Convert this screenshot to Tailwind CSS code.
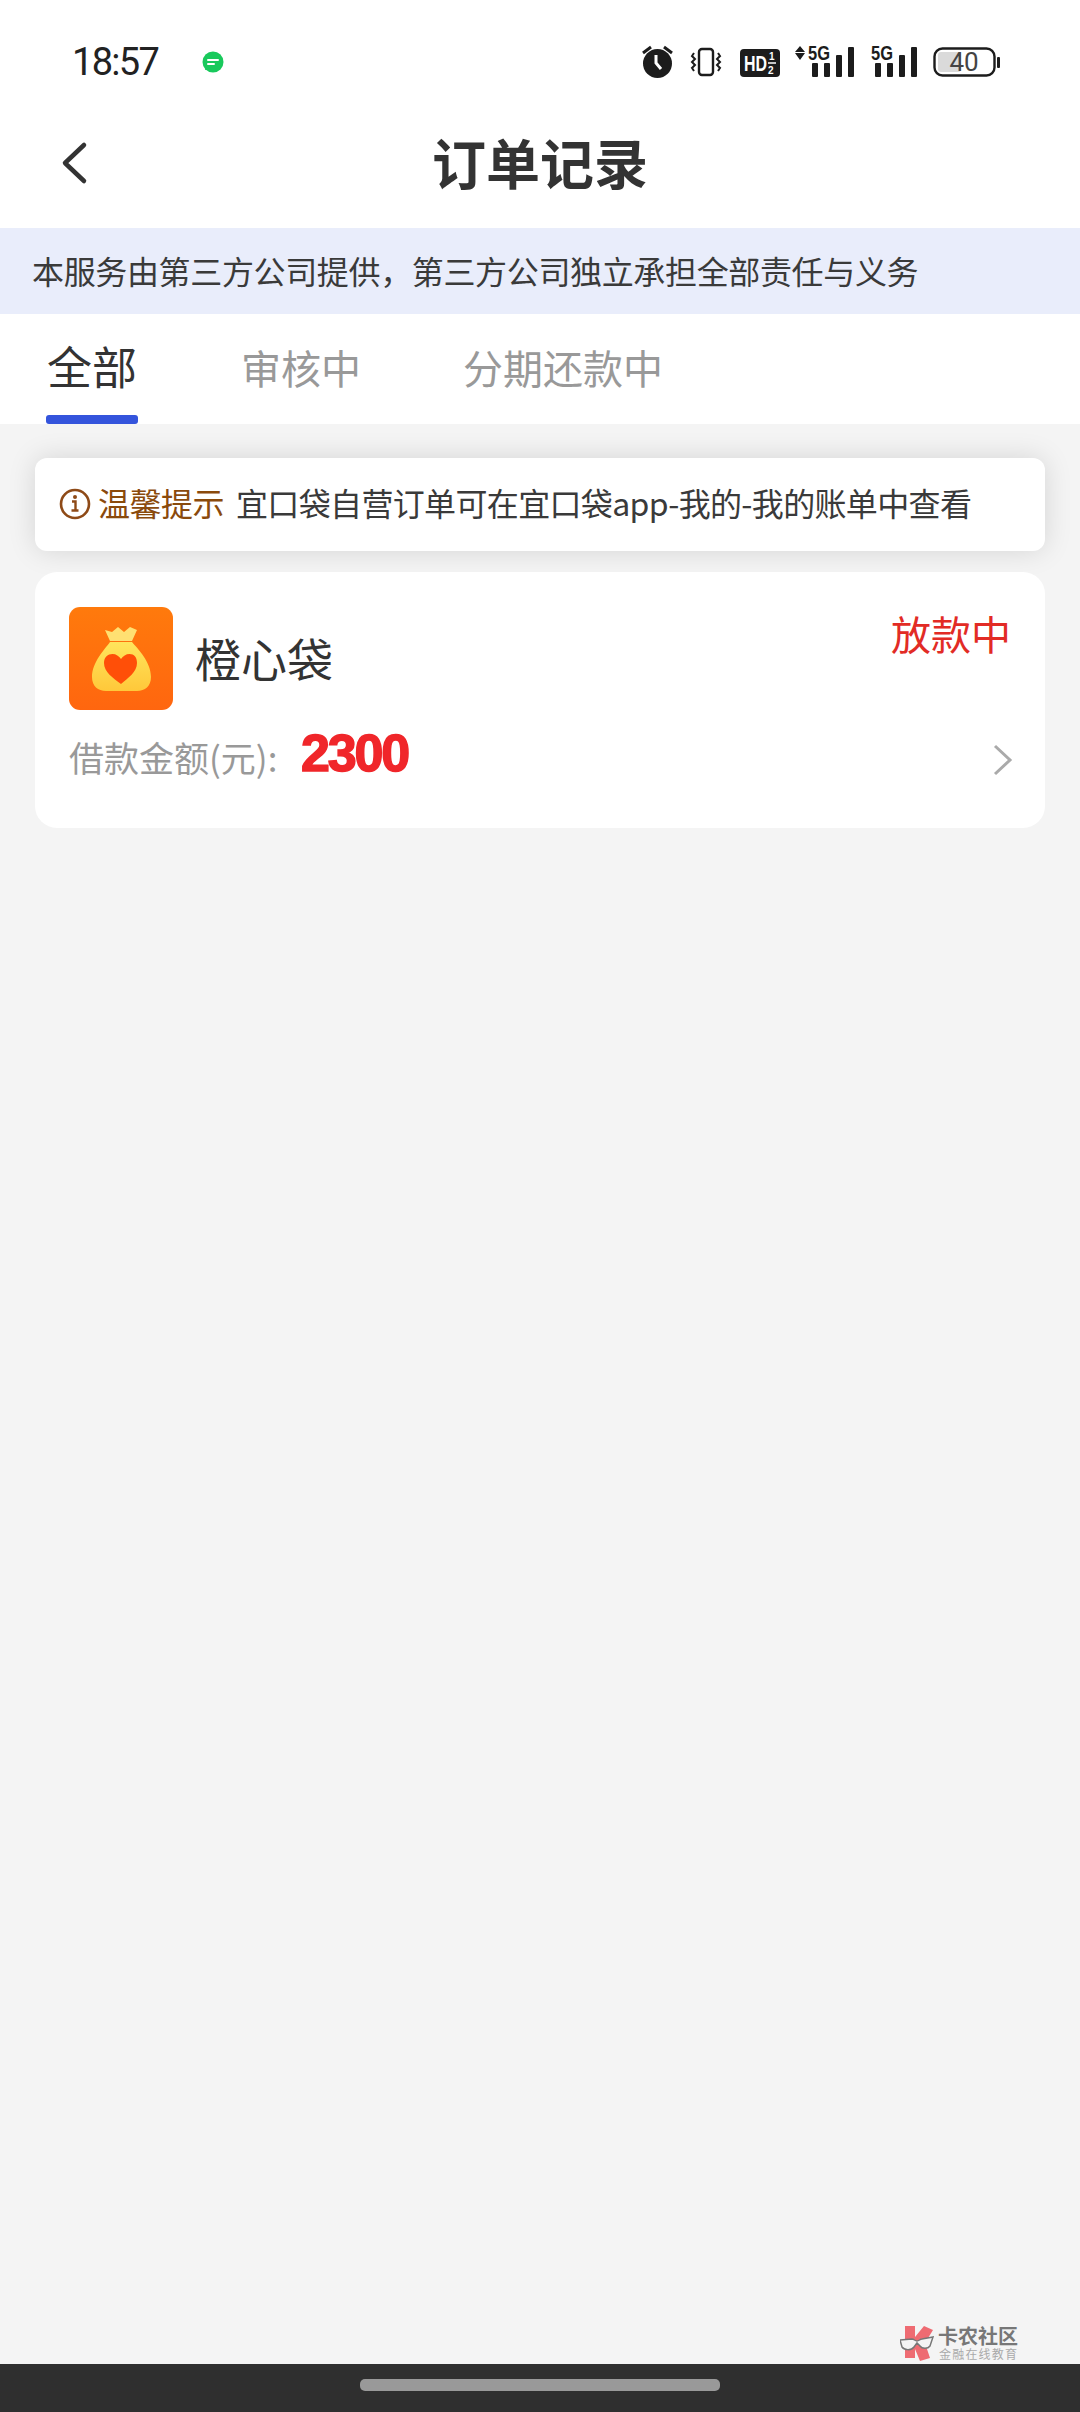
<!DOCTYPE html>
<html lang="zh">

<head>
    <meta charset="UTF-8">
    <title>订单记录</title>
    <script src="https://cdn.jsdelivr.net/npm/@tailwindcss/browser@4"></script>
</head>

<body class="bg-[#f4f4f4]">
    <div class="relative w-[1080px] h-[2412px] overflow-hidden flex flex-col bg-[#f4f4f4] text-[#333] font-['Noto_Sans_CJK_SC','Noto_Sans',sans-serif]">

        <!-- Status bar -->
        <div class="h-[100px] bg-white flex items-start justify-between pt-[44px] pl-[72px] pr-[80px]">
            <div class="flex items-center h-[36px]">
                <span class="w-[129px] text-[38px] leading-[36px] text-[#222] tracking-[-1.700px] font-['Roboto',sans-serif]">18:57</span>
                <svg class="w-[24px] h-[24px]" viewBox="0 0 24 24">
                    <circle cx="12" cy="12" r="10.5" fill="#19c95c" />
                    <path d="M4 20l1-6 5 4z" fill="#19c95c" />
                    <path d="M7 10h10M7 14h6" stroke="#fff" stroke-width="2" stroke-linecap="round" />
                </svg>
            </div>
            <div class="flex items-center h-[36px]">
                <svg class="w-[31px] h-[36px] mr-[17px]" viewBox="0 0 31 36">
                    <circle cx="15.5" cy="19.5" r="14.5" fill="#1c1c1c" />
                    <path d="M1 9l8-6M22 3l8 6" stroke="#1c1c1c" stroke-width="3" />
                    <path d="M14 11v8l5 6" fill="none" stroke="#fff" stroke-width="3" />
                </svg>
                <svg class="w-[32px] h-[36px] mr-[18px]" viewBox="0 0 32 36">
                    <rect x="9" y="5" width="14" height="26" rx="3" fill="none" stroke="#1c1c1c" stroke-width="2.4" />
                    <path d="M4 9l-2 3 3 3-3 3 3 3-3 3 2 3M28 9l2 3-3 3 3 3-3 3 3 3-2 3" fill="none" stroke="#1c1c1c" stroke-width="2" />
                </svg>
                <svg class="w-[40px] h-[36px] mr-[15px] overflow-visible" viewBox="0 0 40 36">
                    <rect x="0" y="5" width="40" height="28" rx="4" fill="#1c1c1c" />
                    <text x="4" y="27" font-family="Liberation Sans" font-weight="700" font-size="22" fill="#fff" textLength="23" lengthAdjust="spacingAndGlyphs">HD</text>
                    <text x="29" y="16" font-family="Liberation Sans" font-weight="700" font-size="10" fill="#fff">1</text>
                    <path d="M28 19h8" stroke="#fff" stroke-width="1.5" />
                    <text x="28" y="30" font-family="Liberation Sans" font-weight="700" font-size="10" fill="#fff">2</text>
                </svg>
                <svg class="w-[59px] h-[36px] mr-[17px] overflow-visible" viewBox="0 0 59 36">
                    <path d="M0 8l5-6 5 6zM0 9h10l-5 7z" fill="#1c1c1c" />
                    <text x="13" y="16" font-family="Liberation Sans" font-weight="700" font-size="20" fill="#1c1c1c" textLength="22" lengthAdjust="spacingAndGlyphs">5G</text>
                    <rect x="17" y="19" width="6" height="14" rx="1" fill="#1c1c1c" />
                    <rect x="29" y="19" width="6" height="14" rx="1" fill="#1c1c1c" />
                    <rect x="41" y="11" width="6" height="22" rx="1" fill="#1c1c1c" />
                    <rect x="53" y="3" width="6" height="30" rx="1" fill="#1c1c1c" />
                </svg>
                <svg class="w-[46px] h-[36px] mr-[16px] overflow-visible" viewBox="0 0 46 36">
                    <text x="0" y="16" font-family="Liberation Sans" font-weight="700" font-size="20" fill="#1c1c1c" textLength="22" lengthAdjust="spacingAndGlyphs">5G</text>
                    <rect x="4" y="19" width="6" height="14" rx="1" fill="#1c1c1c" />
                    <rect x="16" y="19" width="6" height="14" rx="1" fill="#1c1c1c" />
                    <rect x="28" y="11" width="6" height="22" rx="1" fill="#1c1c1c" />
                    <rect x="40" y="3" width="6" height="30" rx="1" fill="#1c1c1c" />
                </svg>
                <svg class="w-[67px] h-[36px]" viewBox="0 0 67 36">
                    <rect x="1.5" y="4.5" width="60" height="27" rx="8" fill="#fff" stroke="#1c1c1c" stroke-width="2.4" />
                    <rect x="5" y="8" width="23" height="20" rx="3" fill="#dadada" />
                    <text x="31" y="27" text-anchor="middle" font-family="Roboto" font-size="26" fill="#444">40</text>
                    <rect x="64" y="13" width="3" height="11" rx="1" fill="#1c1c1c" />
                </svg>
            </div>
        </div>

        <!-- Nav -->
        <div class="relative h-[128px] bg-white flex items-center justify-center pb-[5px]">
            <svg class="absolute left-[60px] top-[41px] w-[28px] h-[44px]" viewBox="0 0 28 44">
                <path d="M24 4L5 22l19 18" fill="none" stroke="#333" stroke-width="4.500" stroke-linecap="round" stroke-linejoin="round" />
            </svg>
            <h1 class="text-[54px] leading-none font-bold text-[#333]">订单记录</h1>
        </div>

        <!-- Notice -->
        <div class="h-[86px] bg-[#e9edfb] flex items-center pl-[32px] pb-[3px] text-[32px] tracking-[-0.35px] text-[#3a3a3a]">
            本服务由第三方公司提供，第三方公司独立承担全部责任与义务
        </div>

        <!-- Tabs -->
        <div class="h-[110px] bg-white flex pl-[46px]">
            <div class="flex flex-col justify-between items-center w-[92px] mr-[103px]">
                <span class="mt-[28px] text-[45px] leading-[48px] text-[#333]">全部</span>
                <span class="block w-[92px] h-[9px] rounded-[3px] bg-[#3454dc]"></span>
            </div>
            <div class="flex gap-[102px]">
                <span class="mt-[29px] text-[40px] leading-[48px] text-[#999]">审核中</span>
                <span class="mt-[29px] text-[40px] leading-[48px] text-[#999]">分期还款中</span>
            </div>
        </div>

        <!-- Content -->
        <div class="flex-1 flex flex-col gap-[21px] pt-[34px] px-[35px]">
            <div class="h-[93px] bg-white rounded-[12px] shadow-[0_0_28px_rgba(0,0,0,0.13)] flex items-center pl-[24px] pb-[5px]">
                <svg class="w-[32px] h-[32px] mr-[7px] mt-[4px]" viewBox="0 0 32 32">
                    <circle cx="16" cy="16" r="14" fill="none" stroke="#8e4a17" stroke-width="2.600" />
                    <path d="M13 13.500h3.500v9M12.500 22.500h7" fill="none" stroke="#8e4a17" stroke-width="2.400" />
                    <circle cx="16" cy="9" r="2" fill="#8e4a17" />
                </svg>
                <span class="text-[32px] tracking-[-0.5px] text-[#8a4a0c] mr-[12px]">温馨提示</span>
                <span class="text-[32px] tracking-[-0.65px] text-[#3a3a3a]">宜口袋自营订单可在宜口袋app-我的-我的账单中查看</span>
            </div>

            <div class="h-[256px] bg-white rounded-[22px] flex flex-col pl-[34px] pr-[34px] pt-[35px]">
                <div class="flex items-start justify-between">
                    <div class="flex items-center">
                        <svg class="w-[104px] h-[103px] mr-[22px]" viewBox="0 0 104 103">
                            <defs>
                                <linearGradient id="iconBg" x1="0" y1="0" x2="0" y2="1">
                                    <stop offset="0" stop-color="#ff7a0c" />
                                    <stop offset="1" stop-color="#ff660f" />
                                </linearGradient>
                                <linearGradient id="bagFill" x1="0" y1="0" x2="0" y2="1">
                                    <stop offset="0" stop-color="#ffe55c" />
                                    <stop offset="1" stop-color="#ffc83a" />
                                </linearGradient>
                            </defs>
                            <rect width="104" height="103" rx="11" fill="url(#iconBg)" />
                            <path d="M36 23l7 2 6-5 6 5 6-5 7 3-5 11H41z" fill="#ffe072" />
                            <path d="M41 35h22c6 7 19 20 19 35 0 9-6 14-14 14H37c-8 0-14-5-14-14 0-15 13-28 18-35z" fill="url(#bagFill)" />
                            <path d="M52 77C44 71 35 65 35 56c0-6 4-9 8.500-9 3.500 0 6.500 2 8.500 5 2-3 5-5 8.500-5 4.500 0 7.500 3 7.500 9 0 9-9 15-16 21z" fill="#ff4f08" />
                        </svg>
                        <span class="text-[46px] leading-none text-[#333] pb-[3px]">橙心袋</span>
                    </div>
                    <span class="mt-[-2px] text-[40px] leading-[56px] text-[#e22b25]">放款中</span>
                </div>
                <div class="flex items-center justify-between mt-[7px]">
                    <div class="flex items-center">
                        <span class="text-[35px] leading-[80px] text-[#999] w-[232px]">借款金额(元):</span>
                        <span class="text-[52px] leading-[80px] -mt-[9px] font-bold text-[#f0262a] tracking-[-2.200px] font-['Liberation_Sans',sans-serif] [-webkit-text-stroke:1.5px_#f0262a]">2300</span>
                    </div>
                    <svg class="w-[20px] h-[32px] mr-[-2px] mt-[6px]" viewBox="0 0 20 32">
                        <path d="M2 2l15 14L2 30" fill="none" stroke="#aaa" stroke-width="3" />
                    </svg>
                </div>
            </div>
        </div>

        <!-- Watermark -->
        <div class="absolute left-[900px] top-[2325px] flex items-center gap-[3px]">
            <svg class="w-[35px] h-[36px]" viewBox="0 0 35 36">
                <path d="M5 1h10v11l9-11 9 4-8 13 5 15-10 3-5-12v9H5z" fill="#ee6b72" />
                <path d="M0 15l12-1c2 0 3 2 5 2s3-2 5-2l11-2-3 9c-2 3-8 3-10 0l-3-3-3 4c-3 4-10 3-12 0z" fill="#f4f4f4" stroke="#777" stroke-width="1.500" />
            </svg>
            <div class="flex flex-col">
                <span class="text-[20px] leading-[22px] font-bold text-[#777]">卡农社区</span>
                <span class="text-[12px] leading-[14px] tracking-[1.200px] text-[#aaa] ml-[1px]">金融在线教育</span>
            </div>
        </div>

        <!-- Gesture bar -->
        <div class="h-[48px] bg-[#2f2f2f] flex items-start justify-center pt-[15px]">
            <div class="w-[360px] h-[12px] rounded-[5px] bg-[#999]"></div>
        </div>
    </div>
</body>

</html>
